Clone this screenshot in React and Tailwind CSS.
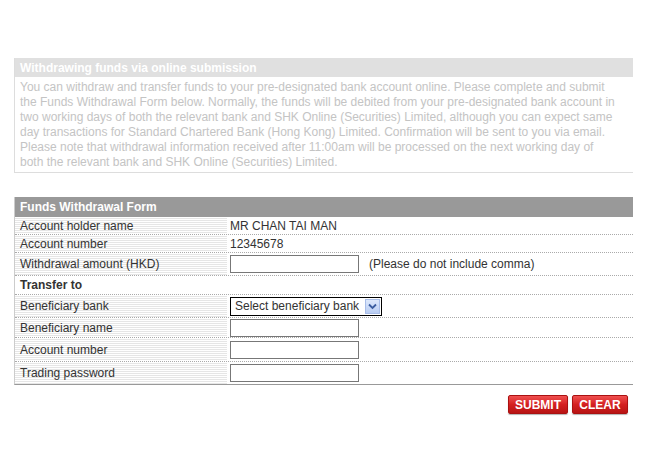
import React from 'react';

const stripe =
  'bg-[repeating-linear-gradient(180deg,#ffffff_0px,#ffffff_1px,#e6e6e6_1px,#e6e6e6_2px)]';

const Row = ({ label, children, h = 'h-[18px]' }) => (
  <div className={`flex ${h} border-b border-dotted border-[#aaa]`}>
    <div className={`w-[212px] shrink-0 pl-[5px] flex items-center ${stripe}`}>{label}</div>
    <div className="flex-1 flex items-center pl-[3px]">{children}</div>
  </div>
);

const TextBox = () => (
  <input className="w-[129px] h-[18px] border border-[#777] bg-white outline-none" />
);

const App = () => {
  return (
    <div className="w-[650px] h-[462px] bg-white text-[12px] text-[#333] font-['Liberation_Sans',Arial,sans-serif] pt-[58px] pl-[14px]">
      <div className="w-[619px] border-l border-b border-[#ddd]">
        <div className="h-[19px] bg-[#e0e0e0] text-white font-bold pl-[5px] flex items-center">
          Withdrawing funds via online submission
        </div>
        <p className="text-[#c4c4c4] leading-[15px] pl-[5px] pr-[4px] pt-[3px] pb-[2px] whitespace-nowrap">
          You can withdraw and transfer funds to your pre-designated bank account online. Please complete and submit
          <br />
          the Funds Withdrawal Form below. Normally, the funds will be debited from your pre-designated bank account in
          <br />
          two working days of both the relevant bank and SHK Online (Securities) Limited, although you can expect same
          <br />
          day transactions for Standard Chartered Bank (Hong Kong) Limited. Confirmation will be sent to you via email.
          <br />
          Please note that withdrawal information received after 11:00am will be processed on the next working day of
          <br />
          both the relevant bank and SHK Online (Securities) Limited.
        </p>
      </div>

      <div className="w-[619px] mt-[24px] border-l border-b border-l-[#ccc] border-b-[#999]">
        <div className="h-[20px] bg-[#999] text-white font-bold pl-[5px] flex items-center">
          Funds Withdrawal Form
        </div>
        <Row label="Account holder name">MR CHAN TAI MAN</Row>
        <Row label="Account number">12345678</Row>
        <Row label="Withdrawal amount (HKD)" h="h-[23px]">
          <TextBox />
          <span className="ml-[10px]">(Please do not include comma)</span>
        </Row>
        <div className="h-[19px] border-b border-dotted border-[#aaa] pl-[5px] flex items-center font-bold">
          Transfer to
        </div>
        <Row label="Beneficiary bank" h="h-[23px]">
          <div className="w-[152px] h-[19px] border border-black bg-white flex items-center justify-between pl-[4px] pr-[1px]">
            <span>Select beneficiary bank</span>
            <span className="w-[15px] h-[15px] bg-[linear-gradient(180deg,#dde8fb,#b9cdf3)] border border-[#a8bde8] flex items-center justify-center">
              <svg width="9" height="7" viewBox="0 0 9 7">
                <path d="M1 1.5 L4.5 5 L8 1.5" fill="none" stroke="#3b5da0" strokeWidth="1.8" />
              </svg>
            </span>
          </div>
        </Row>
        <Row label="Beneficiary name" h="h-[20px]">
          <TextBox />
        </Row>
        <Row label="Account number" h="h-[24px]">
          <TextBox />
        </Row>
        <div className="flex h-[22px]">
          <div className={`w-[212px] shrink-0 pl-[5px] flex items-center ${stripe}`}>Trading password</div>
          <div className="flex-1 flex items-center pl-[3px]">
            <TextBox />
          </div>
        </div>
      </div>

      <div className="w-[614px] flex justify-end gap-[4px] mt-[10px]">
        <button className="w-[60px] h-[19px] rounded-[2px] border border-[#a11] bg-[linear-gradient(180deg,#f05050,#d42020_50%,#b81414)] text-white font-bold font-['Liberation_Sans',Arial,sans-serif] text-[12px] leading-none shadow-[0_1px_1px_rgba(0,0,0,0.3)]">
          SUBMIT
        </button>
        <button className="w-[56px] h-[19px] rounded-[2px] border border-[#a11] bg-[linear-gradient(180deg,#f05050,#d42020_50%,#b81414)] text-white font-bold font-['Liberation_Sans',Arial,sans-serif] text-[12px] leading-none shadow-[0_1px_1px_rgba(0,0,0,0.3)]">
          CLEAR
        </button>
      </div>
    </div>
  );
};

export default App;
